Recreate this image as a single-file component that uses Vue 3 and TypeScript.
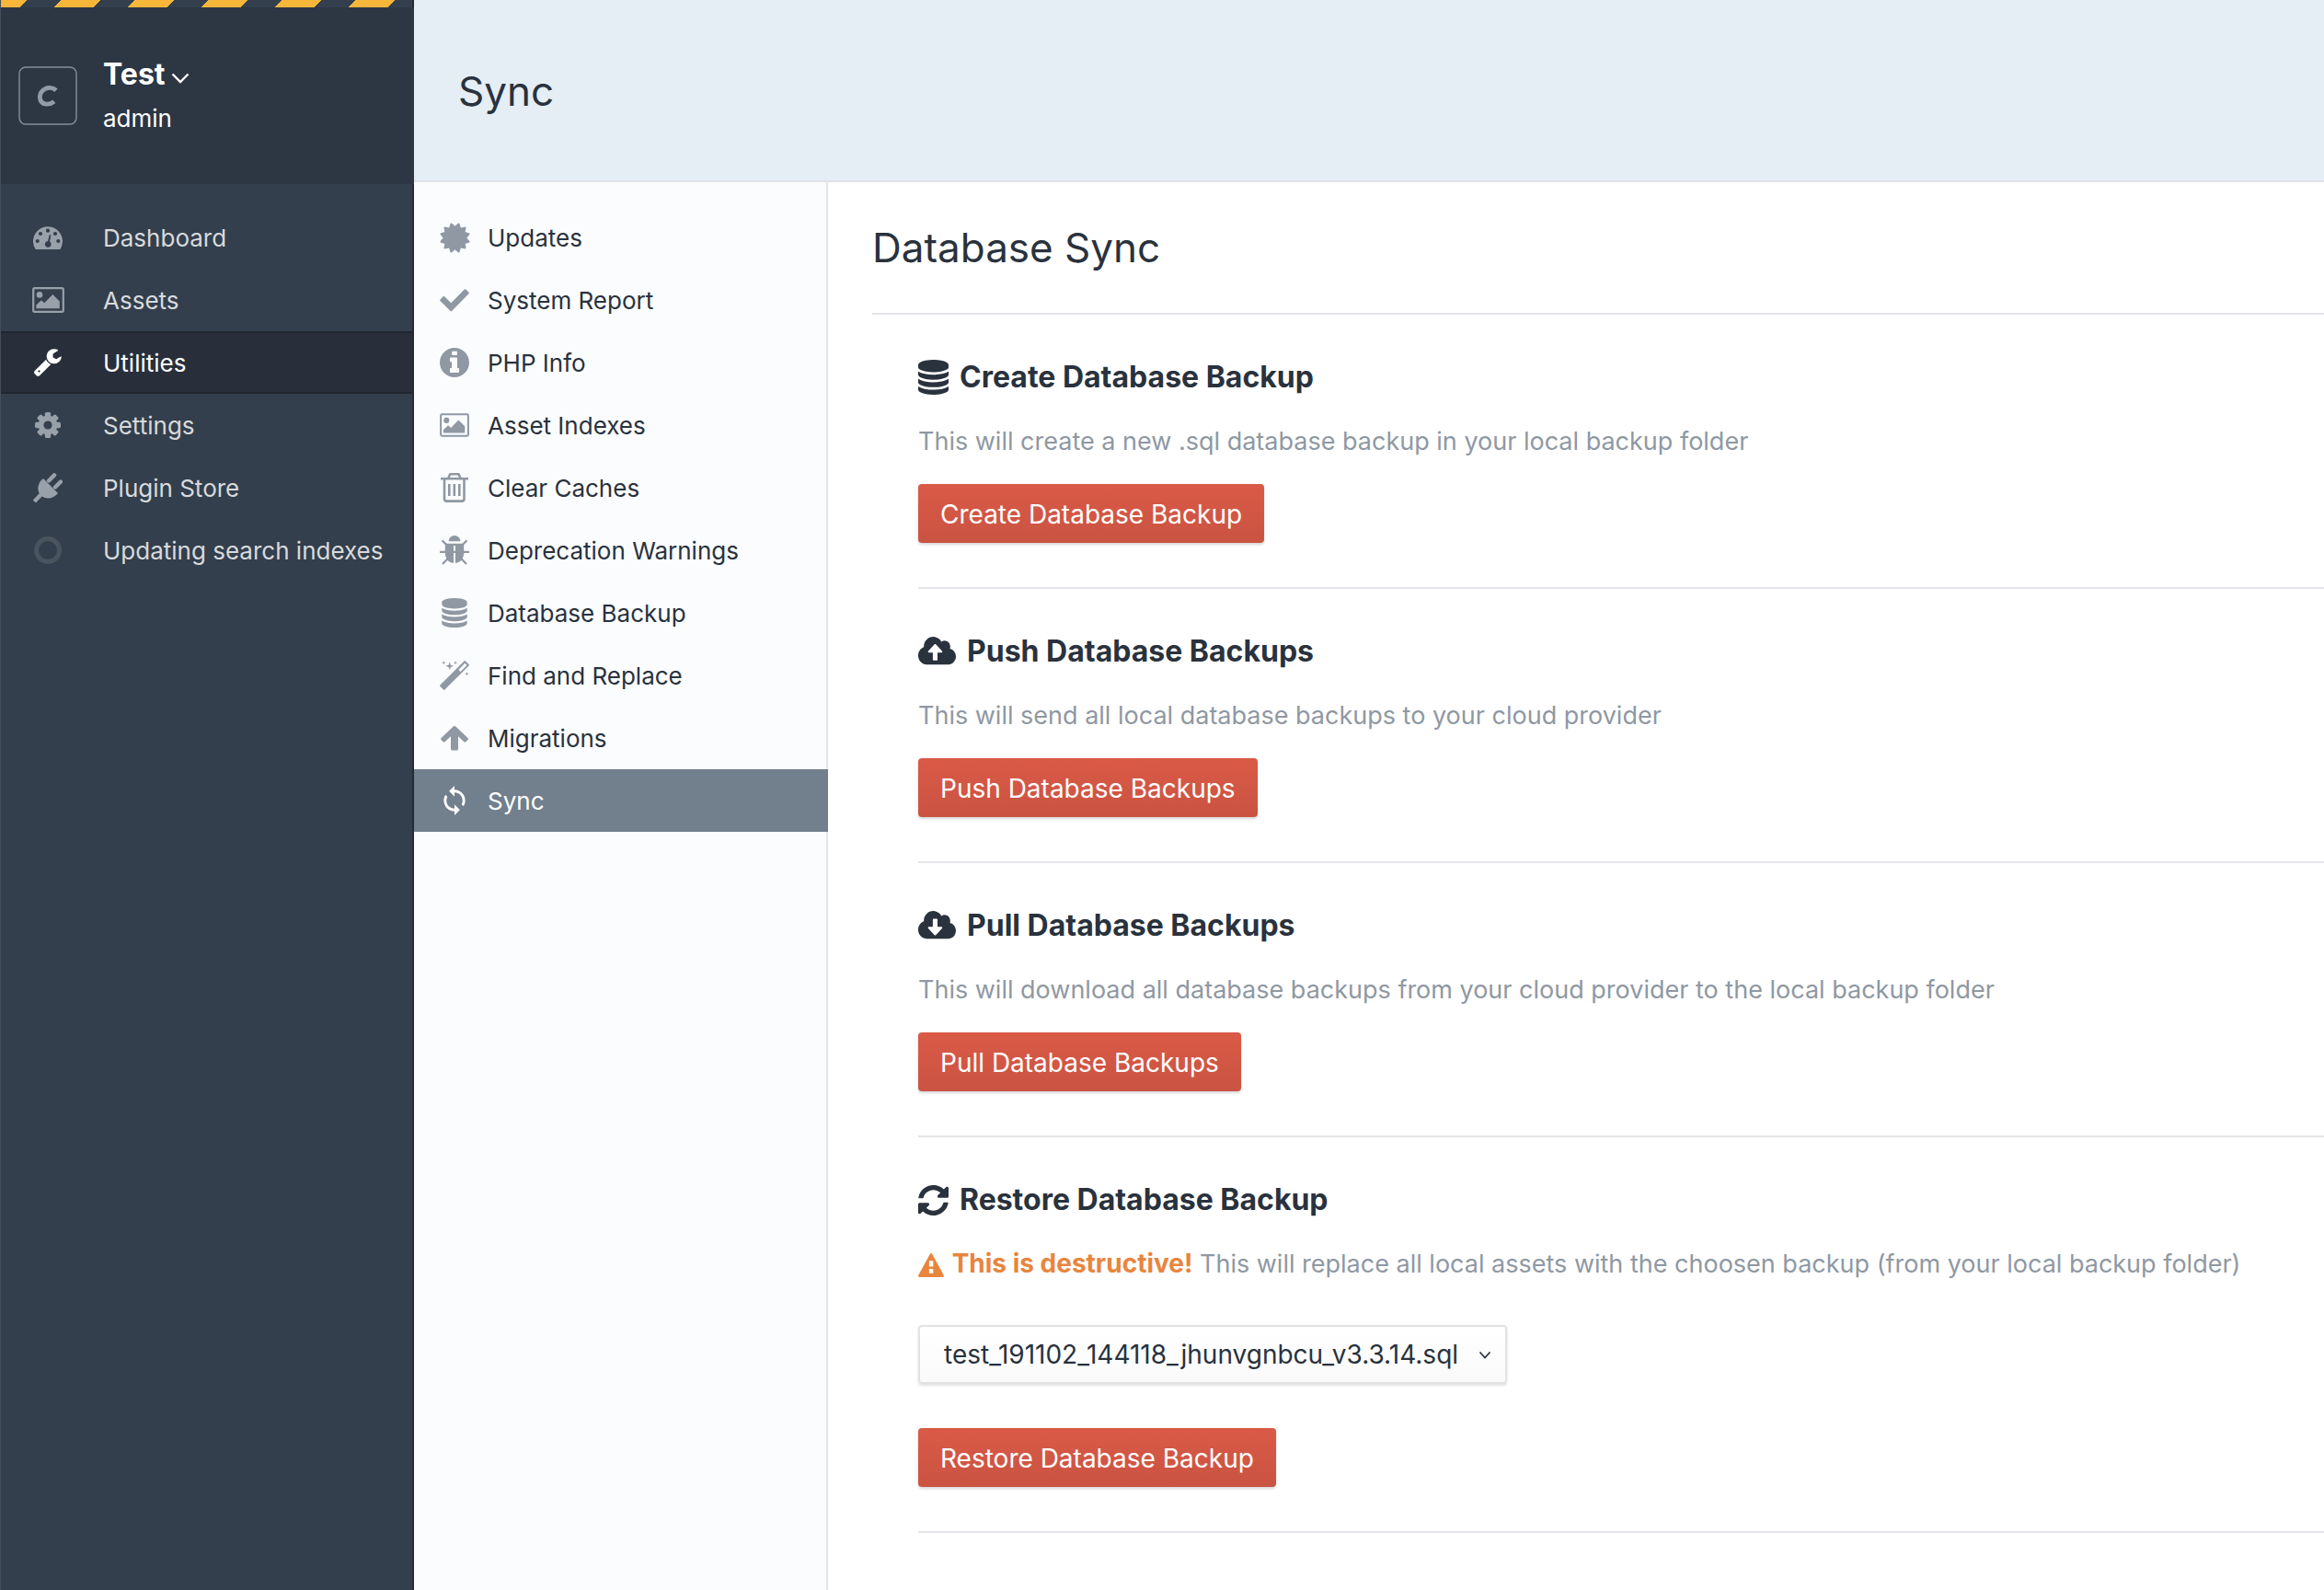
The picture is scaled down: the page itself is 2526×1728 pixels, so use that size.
<script setup lang="ts">
import { ref } from 'vue'

interface Icon {
  box: string
  w: number
  h: number
  body: string
}

interface NavItem {
  label: string
  icon: string
}

interface Task {
  title: string
  icon: string
  text: string
  warning?: string
  choose?: boolean
}

const burst = (spikes: number, outer: number, inner: number, c: number): string => {
  const points: string[] = []
  for (let i = 0; i < spikes; i++) {
    const step = (2 * Math.PI) / spikes
    const a = (i + 0.5) * step
    const at = (r: number, t: number) => `${(c + r * Math.sin(t)).toFixed(2)},${(c - r * Math.cos(t)).toFixed(2)}`
    points.push(at(inner, a - step / 2), at(outer, a - 0.04), at(outer, a + 0.04))
  }
  return `<polygon points="${points.join(' ')}"/>`
}

const teeth = [0, 45, 90, 135]
  .map((a) => `<rect x="10.8" y="0" width="6.4" height="28" rx="1.6" transform="rotate(${a} 14 14)"/>`)
  .join('')

const star = (x: number, y: number, r: number): string => {
  const k = r * 0.24
  return `<path d="M${x} ${y - r}L${x + k} ${y - k}L${x + r} ${y}L${x + k} ${y + k}L${x} ${y + r}L${x - k} ${y + k}L${x - r} ${y}L${x - k} ${y - k}z"/>`
}

const picture =
  '<rect x="1.2" y="1.2" width="32.6" height="25.6" rx="1.6" fill="none" stroke="currentColor" stroke-width="2.2"/><circle cx="8" cy="8.4" r="3.3"/><path d="M4.3 23.2v-3.6L10 14.2l3.2 3L22.3 8l7.5 7.4v7.8z"/>'

const disks =
  '<path d="M768 768q237 0 443-43t325-127v170q0 69-103 128t-280 93.500-385 34.500-385-34.500-280-93.500-103-128v-170q119 84 325 127t443 43zm0 768q237 0 443-43t325-127v170q0 69-103 128t-280 93.500-385 34.500-385-34.500-280-93.500-103-128v-170q119 84 325 127t443 43zm0-384q237 0 443-43t325-127v170q0 69-103 128t-280 93.500-385 34.500-385-34.500-280-93.500-103-128v-170q119 84 325 127t443 43zm0-1152q208 0 385 34.500t280 93.500 103 128v128q0 69-103 128t-280 93.500-385 34.500-385-34.500-280-93.500-103-128v-128q0-69 103-128t280-93.500 385-34.500z"/>'

const cloud =
  'M537.6 226.6c4.1-10.7 6.4-22.4 6.4-34.6 0-53-43-96-96-96-19.7 0-38.1 6-53.3 16.2C367 64.2 315.3 32 256 32c-88.4 0-160 71.6-160 160 0 2.700.1 5.400.2 8.100C40.2 219.8 0 273.2 0 336c0 79.5 64.5 144 144 144h368c70.7 0 128-57.3 128-128 0-61.9-44-113.6-102.4-125.4z'

const icons: Record<string, Icon> = {
  gauge: {
    box: '0 0 32 25', w: 32, h: 25,
    body: '<path fill-rule="evenodd" d="M2.600 25A16 16 0 1 1 29.400 25zM2.600 16a2.100 2.100 0 1 0 4.200 0a2.100 2.100 0 1 0-4.200 0zM5.900 8a2.100 2.100 0 1 0 4.200 0a2.100 2.100 0 1 0-4.200 0zM13.900 4.700a2.100 2.100 0 1 0 4.200 0a2.100 2.100 0 1 0-4.200 0zM21.900 8a2.100 2.100 0 1 0 4.200 0a2.100 2.100 0 1 0-4.200 0zM25.200 16a2.100 2.100 0 1 0 4.200 0a2.100 2.100 0 1 0-4.200 0zM17.800 9.200l1.700.4L18 16.600a3.400 3.400 0 1 1-2-.5z"/>',
  },
  picture: { box: '0 0 35 28', w: 35, h: 28, body: picture },
  pictureSmall: { box: '0 0 35 28', w: 32, h: 26, body: picture },
  wrench: {
    box: '20 118 1650 1660', w: 30, h: 30,
    body: '<path d="M384 1472q0-26-19-45t-45-19-45 19-19 45 19 45 45 19 45-19 19-45zm644-420l-682 682q-37 37-90 37-52 0-91-37l-106-108q-38-36-38-90 0-53 38-91l681-681q39 98 114.5 173.5t173.5 114.5zm634-435q0 39-23 106-47 134-164.5 217.5t-258.5 83.500q-185 0-316.5-131.5t-131.5-316.5 131.5-316.5 316.5-131.5q58 0 121.5 16.500t107.5 46.500q16 11 16 28t-16 28l-293 169v224l193 107q5-3 79-48.500t135.5-81 70.5-35.500q15 0 23.5 10t8.500 25z"/>',
  },
  gear: {
    box: '0 0 28 28', w: 28, h: 28,
    body: `<mask id="gear-hole"><rect width="28" height="28" fill="#fff"/><circle cx="14" cy="14" r="4.600" fill="#000"/></mask><g mask="url(#gear-hole)"><circle cx="14" cy="14" r="10.4"/>${teeth}</g>`,
  },
  plug: {
    box: '0 0 32 33', w: 32, h: 33,
    body: '<path d="M11 6L27 22C22.500 28 14 29.500 8.500 24.500C3.500 19.500 4.500 11 11 6z"/><path d="M17 8.500L23 2.400M24 15.500L30 9.500" fill="none" stroke="currentColor" stroke-width="4.400" stroke-linecap="round"/><path d="M9.500 22.500L1.300 31" fill="none" stroke="currentColor" stroke-width="4.400"/>',
  },
  ring: { box: '0 0 30 30', w: 30, h: 30, body: '<circle cx="15" cy="15" r="12.500" fill="none" stroke="#4a545e" stroke-width="5"/>' },
  burst: { box: '0 0 33 33', w: 33, h: 33, body: burst(12, 16.5, 12.8, 16.5) },
  check: {
    box: '0 0 32 25', w: 32, h: 25,
    body: '<path d="M1.300 12.200L4.400 9L12.300 16.700L27.600 1.300L30.700 4.600L12.300 23.300z" stroke="currentColor" stroke-width="2.200" stroke-linejoin="round"/>',
  },
  info: {
    box: '0 0 32 32', w: 32, h: 32,
    body: '<path fill-rule="evenodd" d="M0 16a16 16 0 1 0 32 0a16 16 0 1 0-32 0zM14 3.700h4.200q.8 0 .8.800v2.800q0 .8-.8.800H14q-.8 0-.8-.8V4.500q0-.8.8-.8zM11.800 10.400h6.400q.8 0 .8.800V22h1.200q.8 0 .8.800v3.400q0 .8-.8.800h-8.400q-.8 0-.8-.8v-3.400q0-.8.800-.8H13v-6.800h-1.200q-.8 0-.8-.8v-3q0-.8.800-.8z"/>',
  },
  trash: {
    box: '0 0 30 32', w: 30, h: 32,
    body: '<g fill="none" stroke="currentColor" stroke-width="2.600"><path d="M0 6.300H30M8.300 6L9.800 2Q10.100 1.300 11 1.300H18.800Q19.700 1.300 20 2L21.500 6M4 6.500V28Q4 30.600 6.500 30.600H23Q25.500 30.600 25.500 28V6.500M9.300 12V25M14.800 12V25M20.300 12V25"/></g>',
  },
  bug: {
    box: '0 0 32 32', w: 32, h: 32,
    body: '<path d="M9.700 6.300a6.300 6.300 0 0 1 12.600 0zM5.800 8.700H26.200V18C26.200 25 23 29.400 17 29.900V11H15V29.900C9 29.400 5.800 25 5.800 18z"/><path d="M0 17.800H32M2.600 5.400L7.500 10.200M29.400 5.400L24.500 10.200M3 31L9 24.800M29 31L23 24.800" fill="none" stroke="currentColor" stroke-width="2.200"/>',
  },
  disks: { box: '0 0 1536 1792', w: 28, h: 32, body: disks },
  disksLarge: { box: '0 0 1536 1792', w: 33, h: 38, body: disks },
  wand: {
    box: '0 0 32 32', w: 32, h: 32,
    body: `<path fill-rule="evenodd" d="M.4 26.600L26.500.4Q27.200-.2 27.900.4L31.600 4.100Q32.200 4.800 31.600 5.500L5.400 31.600Q4.700 32.200 4 31.600L.4 28Q-.2 27.300.4 26.600zM20.400 9.900L22.500 12L29.500 5L27.300 2.800z"/>${star(10.7, 5.8, 4.5)}${star(4.3, 2.3, 2.3)}${star(17, 2.3, 2.3)}${star(29.4, 14.3, 2.3)}`,
  },
  arrow: {
    box: '0 0 30 27', w: 30, h: 27,
    body: '<path d="M13.700.6Q15-.5 16.300.6L29.400 13Q30.400 14.100 29.400 15.200L27.500 17.100Q26.300 18.100 25.200 17.100L19 11.200V25Q19 26.600 17.400 26.600H12.600Q11 26.600 11 25V11.200L4.800 17.100Q3.700 18.100 2.500 17.100L.6 15.200Q-.4 14.100.6 13z"/>',
  },
  sync: {
    box: '4 1 16 22', w: 24, h: 32,
    body: '<path d="M12 4V1L8 5l4 4V6c3.310 0 6 2.690 6 6 0 1.010-.25 1.970-.7 2.800l1.460 1.460C19.540 15.030 20 13.570 20 12c0-4.420-3.580-8-8-8zm0 14c-3.310 0-6-2.690-6-6 0-1.010.25-1.970.7-2.800L5.240 7.740C4.460 8.970 4 10.430 4 12c0 4.420 3.580 8 8 8v3l4-4-4-4v3z"/>',
  },
  cloudUp: {
    box: '0 32 640 490', w: 41, h: 33,
    body: `<path d="${cloud}M393.4 288H328v112c0 8.800-7.200 16-16 16h-48c-8.800 0-16-7.200-16-16V288h-65.400c-14.300 0-21.400-17.200-11.300-27.300l105.400-105.400c6.200-6.200 16.400-6.200 22.600 0l105.400 105.400c10.100 10.100 2.900 27.300-11.300 27.300z" fill-rule="evenodd"/>`,
  },
  cloudDown: {
    box: '0 32 640 490', w: 41, h: 33,
    body: `<path d="${cloud}M404.7 315.300L299.300 420.700c-6.200 6.200-16.400 6.200-22.600 0L171.300 315.300c-10.100-10.100-2.900-27.300 11.300-27.300H248V176c0-8.800 7.200-16 16-16h48c8.800 0 16 7.200 16 16v112h65.400c14.200 0 21.400 17.200 11.300 27.300z" fill-rule="evenodd"/>`,
  },
  refresh: {
    box: '8 8 496 496', w: 33, h: 33,
    body: '<path d="M370.720 133.280C339.458 104.008 298.888 87.962 255.848 88c-77.458.068-144.328 53.178-162.791 126.850-1.344 5.363-6.122 9.150-11.651 9.150H24.103c-7.498 0-13.194-6.807-11.807-14.176C33.933 94.924 134.813 8 256 8c66.448 0 126.791 26.136 171.315 68.685L463.030 40.970C478.149 25.851 504 36.559 504 57.941V192c0 13.255-10.745 24-24 24H345.941c-21.382 0-32.090-25.851-16.971-40.971l41.750-41.749zM32 296h134.059c21.382 0 32.090 25.851 16.971 40.971l-41.750 41.750c31.262 29.273 71.835 45.319 114.876 45.280 77.418-.07 144.315-53.144 162.787-126.849 1.344-5.363 6.122-9.150 11.651-9.150h57.304c7.498 0 13.194 6.807 11.807 14.176C478.067 417.076 377.187 504 256 504c-66.448 0-126.791-26.136-171.315-68.685L48.970 471.030C33.851 486.149 8 475.441 8 454.059V320c0-13.255 10.745-24 24-24z"/>',
  },
}

const mainNav: NavItem[] = [
  { label: 'Dashboard', icon: 'gauge' },
  { label: 'Assets', icon: 'picture' },
  { label: 'Utilities', icon: 'wrench' },
  { label: 'Settings', icon: 'gear' },
  { label: 'Plugin Store', icon: 'plug' },
  { label: 'Updating search indexes', icon: 'ring' },
]

const utilities: NavItem[] = [
  { label: 'Updates', icon: 'burst' },
  { label: 'System Report', icon: 'check' },
  { label: 'PHP Info', icon: 'info' },
  { label: 'Asset Indexes', icon: 'pictureSmall' },
  { label: 'Clear Caches', icon: 'trash' },
  { label: 'Deprecation Warnings', icon: 'bug' },
  { label: 'Database Backup', icon: 'disks' },
  { label: 'Find and Replace', icon: 'wand' },
  { label: 'Migrations', icon: 'arrow' },
  { label: 'Sync', icon: 'sync' },
]

const tasks: Task[] = [
  { title: 'Create Database Backup', icon: 'disksLarge', text: 'This will create a new .sql database backup in your local backup folder' },
  { title: 'Push Database Backups', icon: 'cloudUp', text: 'This will send all local database backups to your cloud provider' },
  { title: 'Pull Database Backups', icon: 'cloudDown', text: 'This will download all database backups from your cloud provider to the local backup folder' },
  {
    title: 'Restore Database Backup',
    icon: 'refresh',
    warning: 'This is destructive!',
    text: 'This will replace all local assets with the choosen backup (from your local backup folder)',
    choose: true,
  },
]

const backups = ['test_191102_144118_jhunvgnbcu_v3.3.14.sql']
const chosen = ref(backups[0])
const section = ref('Utilities')
const utility = ref('Sync')
</script>

<template>
  <div class="app">
    <aside class="sidebar">
      <div class="dev-stripe"></div>
      <header class="site">
        <svg class="logo" width="64" height="64" viewBox="0 0 64 64" aria-hidden="true">
          <rect x="1" y="1" width="62" height="62" rx="7" fill="none" stroke="#858f9b" stroke-width="1.4" />
          <path d="M41 26.200C38 23.200 33 22.800 29 24.600C24 27 22.300 32.500 23.800 36.600C25.800 41.800 33.500 42.800 38.800 38.200" fill="none" stroke="#929ca8" stroke-width="4.800" />
        </svg>
        <div class="who">
          <button type="button" class="site-name">
            Test
            <svg width="20" height="12" viewBox="0 0 20 12" aria-hidden="true">
              <path d="M1.500 1.500L10 10L18.500 1.500" fill="none" stroke="currentColor" stroke-width="2.400" />
            </svg>
          </button>
          <span class="user">admin</span>
        </div>
      </header>
      <nav class="main-nav" aria-label="Main">
        <a
          v-for="item in mainNav"
          :key="item.label"
          href="#"
          :class="{ active: item.label === section }"
          @click.prevent="section = item.label"
        >
          <span class="icon">
            <svg :width="icons[item.icon].w" :height="icons[item.icon].h" :viewBox="icons[item.icon].box" fill="currentColor" aria-hidden="true" v-html="icons[item.icon].body" />
          </span>
          {{ item.label }}
        </a>
      </nav>
    </aside>

    <div class="page">
      <header class="page-header">
        <h1>Sync</h1>
      </header>
      <div class="columns">
        <nav class="sub-nav" aria-label="Utilities">
          <a
            v-for="item in utilities"
            :key="item.label"
            href="#"
            :class="{ active: item.label === utility }"
            @click.prevent="utility = item.label"
          >
            <span class="icon">
              <svg :width="icons[item.icon].w" :height="icons[item.icon].h" :viewBox="icons[item.icon].box" fill="currentColor" aria-hidden="true" v-html="icons[item.icon].body" />
            </span>
            {{ item.label }}
          </a>
        </nav>
        <main class="content">
          <h2 class="title">Database Sync</h2>
          <section v-for="task in tasks" :key="task.title" class="task">
            <h3>
              <svg :width="icons[task.icon].w" :height="icons[task.icon].h" :viewBox="icons[task.icon].box" preserveAspectRatio="none" fill="currentColor" aria-hidden="true" v-html="icons[task.icon].body" />
              {{ task.title }}
            </h3>
            <p>
              <strong v-if="task.warning">
                <svg width="28" height="26" viewBox="0 0 28 26" fill="currentColor" aria-hidden="true">
                  <path fill-rule="evenodd" d="M12.900.8Q14-.8 15.100.8L27.700 23.800Q28.400 26 26.500 26H1.500Q-.4 26 .3 23.800zM11.900 8.200V14.500H16.300V8.200zM11.900 17V21.800H16.300V17z" />
                </svg>
                {{ task.warning }}
              </strong>
              {{ task.text }}
            </p>
            <div v-if="task.choose" class="select">
              <select v-model="chosen" aria-label="Backup to restore">
                <option v-for="file in backups" :key="file">{{ file }}</option>
              </select>
              <svg width="14" height="10" viewBox="0 0 14 10" aria-hidden="true">
                <path d="M1.500 1.500L7 7.500L12.500 1.500" fill="none" stroke="currentColor" stroke-width="1.800" />
              </svg>
            </div>
            <button type="button" class="btn">{{ task.title }}</button>
          </section>
        </main>
      </div>
    </div>
  </div>
</template>

<style>
body {
  margin: 0;
  background: #fff;
}
</style>

<style scoped>
.app {
  display: flex;
  min-height: 100vh;
  font-family: Inter, "Liberation Sans", sans-serif;
  font-size: 26px;
  color: #29323d;
}

svg {
  display: block;
  flex: none;
}

a {
  text-decoration: none;
}

h1,
h2,
h3,
p {
  margin: 0;
}

button,
select {
  font: inherit;
}

/* Sidebar */
.sidebar {
  box-sizing: border-box;
  flex: none;
  width: 450px;
  border-left: 1px solid #434e5a;
  border-right: 2px solid #232b35;
  background: #333f4d;
}

.dev-stripe {
  height: 8px;
  background: linear-gradient(135deg, #f5b63a 32%, transparent 32%, transparent 75%, #f5b63a 75%) 0 0 / 80px 8px;
}

.site {
  box-sizing: border-box;
  display: flex;
  gap: 28px;
  height: 192px;
  margin-right: -2px;
  padding: 48px 19px 0;
  background: #2d3643;
}

.logo {
  margin-top: 16px;
}

.who {
  display: flex;
  flex-direction: column;
  align-items: flex-start;
  gap: 8px;
  padding-top: 5px;
  color: #fff;
}

.site-name {
  display: flex;
  align-items: center;
  gap: 6px;
  padding: 0;
  border: 0;
  background: none;
  color: inherit;
  font-size: 32px;
  font-weight: 700;
  line-height: 40px;
  cursor: pointer;
}

.site-name svg {
  margin-top: 8px;
}

.user {
  line-height: 40px;
}

.main-nav {
  padding-top: 24px;
}

.main-nav a,
.sub-nav a {
  box-sizing: border-box;
  display: flex;
  align-items: center;
  height: 68px;
}

.icon {
  display: flex;
  flex: none;
  justify-content: center;
}

.main-nav a {
  color: #d8dadc;
  border: solid transparent;
  border-width: 2px 0;
}

.main-nav .icon {
  width: 102px;
  margin-right: 9px;
  color: #98a0a9;
}

.main-nav .active {
  background: #282f3b;
  border-color: #1f262f;
  color: #fff;
}

.main-nav .active .icon {
  color: #fff;
}

/* Page */
.page {
  display: flex;
  flex: 1;
  flex-direction: column;
  min-width: 0;
}

.page-header {
  display: flex;
  align-items: center;
  box-sizing: border-box;
  height: 198px;
  padding: 2px 48px 0;
  border-bottom: 2px solid #dfe3e8;
  background: #e5edf5;
}

h1,
.title {
  font-size: 44px;
  font-weight: 400;
  line-height: 56px;
}

.columns {
  display: flex;
  flex: 1;
}

.sub-nav {
  box-sizing: border-box;
  flex: none;
  width: 450px;
  padding-top: 26px;
  border-right: 2px solid #e3e5e9;
  background: #fbfcfe;
}

.sub-nav a {
  margin-right: -2px;
  color: #29323d;
}

.sub-nav .icon {
  width: 88px;
  margin-right: -8px;
  color: #8f98a3;
}

.sub-nav .active {
  background: #727f8c;
  color: #fff;
}

.sub-nav .active .icon {
  color: #fff;
}

.content {
  flex: 1;
  min-width: 0;
  padding: 43px 0 48px 48px;
}

.title {
  padding-bottom: 43px;
  border-bottom: 2px solid #e3e5e9;
}

.task {
  display: flex;
  flex-direction: column;
  align-items: flex-start;
  margin-left: 50px;
  padding: 48px 0;
  border-bottom: 2px solid #e3e5e9;
}

.task h3 {
  display: flex;
  align-items: center;
  gap: 12px;
  font-size: 32px;
  font-weight: 700;
  line-height: 40px;
}

.task p {
  margin: 30px 0 26px;
  color: #8f98a3;
  font-size: 27px;
  line-height: 40px;
}

.task strong {
  color: #e8853d;
  font-size: 28px;
  font-weight: 700;
  line-height: 32px;
}

.task strong svg {
  display: inline-block;
  margin-right: 2px;
  vertical-align: -5px;
}

.select {
  position: relative;
  margin: 20px 0 48px;
}

.select select {
  box-sizing: border-box;
  height: 64px;
  padding: 0 50px 0 26px;
  appearance: none;
  border: 2px solid #e1e2e4;
  border-radius: 4px;
  background: linear-gradient(#fff, #fafafa);
  box-shadow: 0 2px 3px rgba(0, 0, 0, 0.12);
  color: #29323d;
  font-size: 28px;
}

.select svg {
  position: absolute;
  top: 28px;
  right: 17px;
  pointer-events: none;
}

.btn {
  height: 64px;
  padding: 2px 24px 0;
  border: 0;
  border-radius: 4px;
  background: linear-gradient(#da5a47, #ca5342);
  box-shadow: 0 2px 3px rgba(0, 0, 0, 0.16);
  color: #fff;
  font-size: 28px;
  cursor: pointer;
}
</style>
